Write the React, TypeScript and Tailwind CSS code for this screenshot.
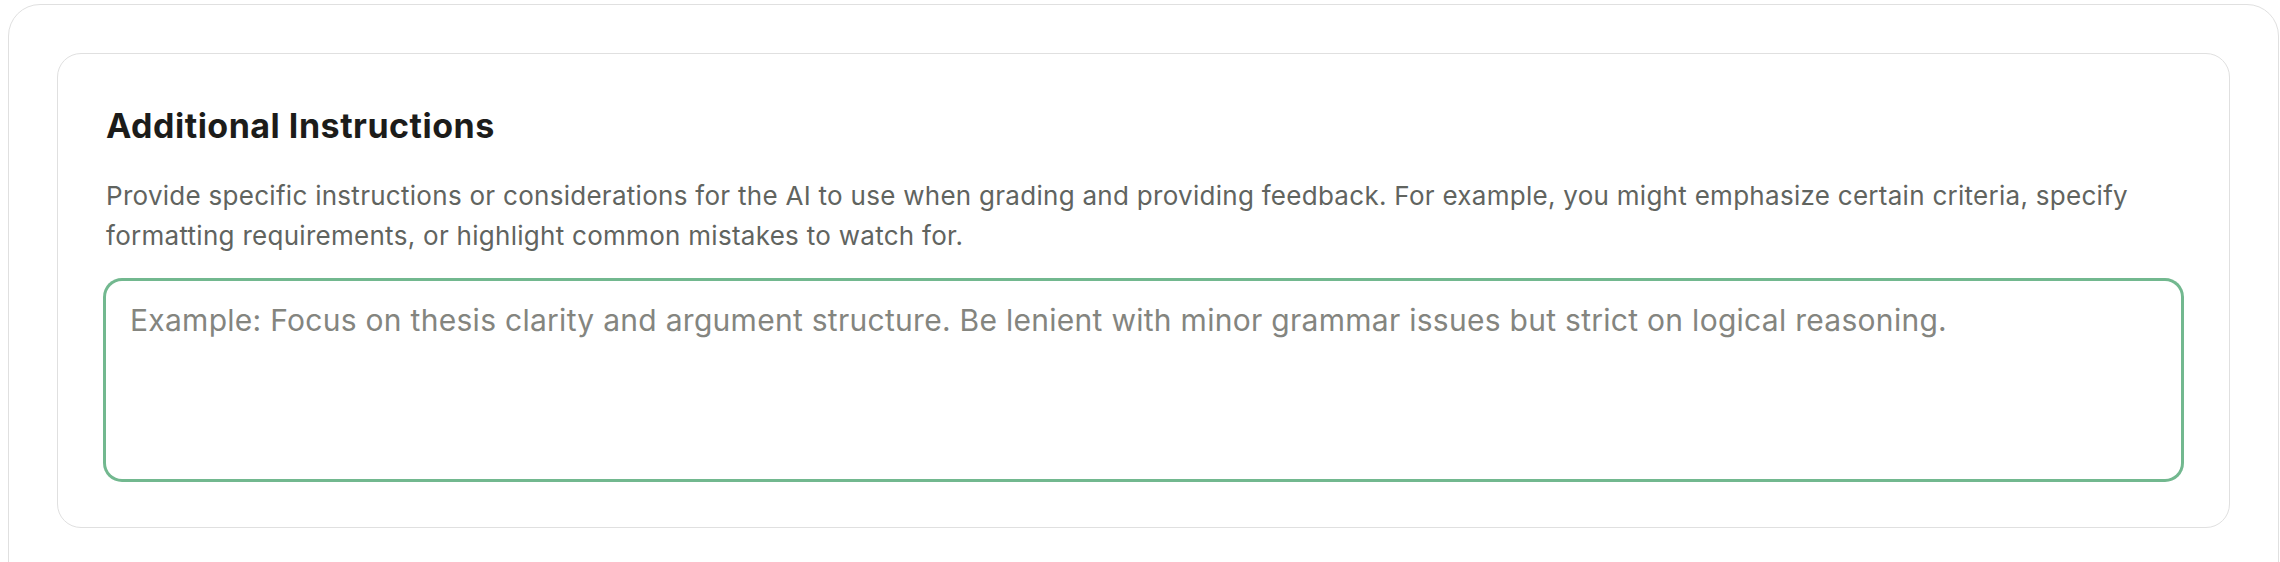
import React from "react";

export default function App() {
  return (
    <div className="w-[2280px] h-[562px] overflow-hidden bg-white" style={{ fontFamily: "Inter, 'Noto Sans', sans-serif" }}>
      <div className="ml-[8px] mr-[1px] mt-[4px] h-[700px] rounded-[32px] border border-[#e0e0e0] p-[48px]">
        <div className="rounded-[24px] border border-[#e0e0e0] bg-white p-[48px]">
          <h2 className="pt-[2px] text-[34px] leading-[44px] font-bold text-[#1c1c1a] tracking-[0.5px]">
            Additional Instructions
          </h2>
          <p className="mt-[28px] text-[26px] leading-[40px] text-[#61645f] tracking-[0.28px]">
            Provide specific instructions or considerations for the AI to use when grading and providing feedback. For example, you might emphasize certain criteria, specify formatting requirements, or highlight common mistakes to watch for.
          </p>
          <textarea
            className="mt-[25px] block w-full h-[198px] resize-none rounded-[16px] border-0 bg-white px-[24px] py-[19px] text-[30px] leading-[40px] tracking-[0.28px] text-[#1c1c1a] outline-none shadow-[0_0_0_3px_#72b88f] placeholder:text-[#84857f]"
            placeholder="Example: Focus on thesis clarity and argument structure. Be lenient with minor grammar issues but strict on logical reasoning."
          />
        </div>
      </div>
    </div>
  );
}
